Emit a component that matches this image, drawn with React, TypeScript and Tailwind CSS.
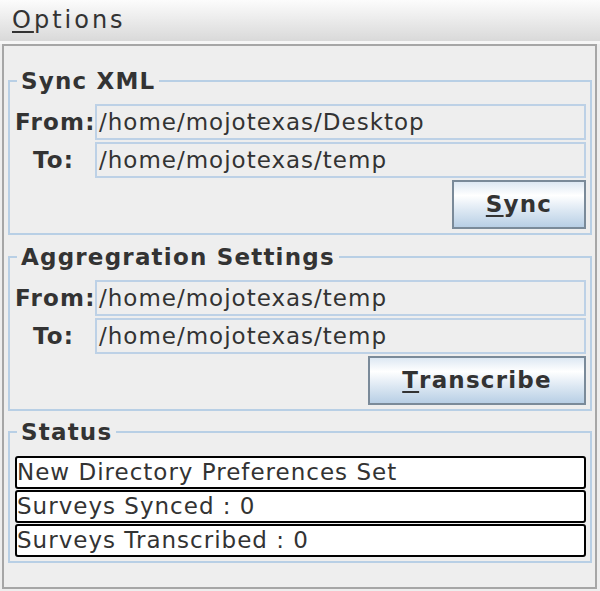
import type { ReactNode } from "react";

function Group({ title, className = "", children }: { title: string; className?: string; children: ReactNode }) {
  return (
    <fieldset className={`border-2 border-solid border-[#b8cfe5] pr-[4px] pb-[4px] pl-[5px] ${className}`}>
      <legend className="ml-[2px] px-[4px] text-[23px] leading-[26px] font-bold tracking-[1.2px] text-[#333333]">
        {title}
      </legend>
      {children}
    </fieldset>
  );
}

function PathRow({ label, value }: { label: string; value: string }) {
  return (
    <div className="flex items-center gap-[3px]">
      <span className="w-[77px] shrink-0 text-center text-[23px] font-bold tracking-[1.2px] text-[#333333]">
        {label}
      </span>
      <div className="flex h-[36px] flex-1 items-center border-2 border-[#bdd1e6] bg-[#eeeeee] pl-[2px] text-[23px] tracking-[1px] text-[#333333]">
        {value}
      </div>
    </div>
  );
}

function MetalButton({ mnemonic, rest, width }: { mnemonic: string; rest: string; width: string }) {
  return (
    <button
      className={`flex h-[49px] items-center justify-center self-end border-2 border-[#7a8a99] bg-[linear-gradient(to_bottom,#dde8f3_0%,#ffffff_30%,#dde8f3_62%,#b8cfe5_100%)] text-[23px] font-bold tracking-[1.2px] text-[#333333] ${width}`}
    >
      <span className="underline decoration-2 underline-offset-[3px]">{mnemonic}</span>
      {rest}
    </button>
  );
}

function StatusLine({ text }: { text: string }) {
  return (
    <div className="flex h-[33px] items-center rounded-[3px] border-2 border-black bg-white pl-0 text-[23px] tracking-[1px] text-[#333333]">
      {text}
    </div>
  );
}

export default function App() {
  return (
    <div className="flex h-[591px] w-[600px] flex-col bg-[#eeeeee] font-['DejaVu_Sans','Liberation_Sans',sans-serif]">
      <div className="flex h-[41px] items-center bg-[linear-gradient(to_bottom,#fcfcfc,#d9d9d9)] pb-[2px] pl-[12px] text-[24px] tracking-[3px] text-[#333333]">
        <span className="underline decoration-2 underline-offset-[3px]">O</span>ptions
      </div>
      <div className="h-[3px] bg-[#f6f6f6]" />

      <div className="mr-[3px] mb-[2px] ml-[2px] flex-1 border-2 border-[#a6a6a6] pt-[22px] pr-[3px] pl-[4px]">
        <Group title="Sync XML">
          <div className="flex flex-col gap-[2px] pt-[10px]">
            <PathRow label="From:" value="/home/mojotexas/Desktop" />
            <PathRow label="To:" value="/home/mojotexas/temp" />
            <MetalButton mnemonic="S" rest="ync" width="w-[134px]" />
          </div>
        </Group>

        <Group title="Aggregration Settings" className="mt-[9px]">
          <div className="flex flex-col gap-[2px] pt-[10px]">
            <PathRow label="From:" value="/home/mojotexas/temp" />
            <PathRow label="To:" value="/home/mojotexas/temp" />
            <MetalButton mnemonic="T" rest="ranscribe" width="w-[218px]" />
          </div>
        </Group>

        <Group title="Status" className="mt-[8px]">
          <div className="flex flex-col gap-[1px] pt-[11px]">
            <StatusLine text="New Directory Preferences Set" />
            <StatusLine text="Surveys Synced : 0" />
            <StatusLine text="Surveys Transcribed : 0" />
          </div>
        </Group>
      </div>
    </div>
  );
}
